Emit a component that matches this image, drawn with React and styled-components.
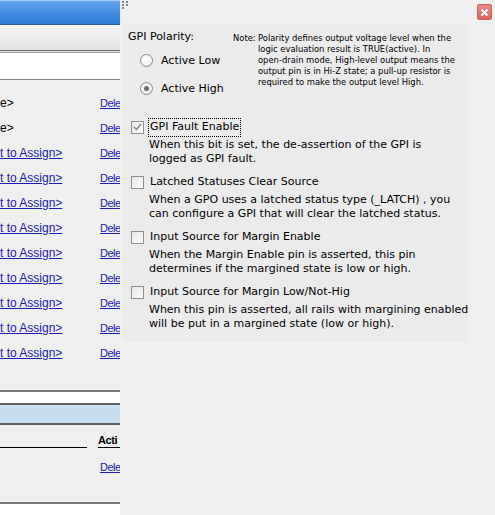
import React from 'react';
import styled, { createGlobalStyle } from 'styled-components';

const Global = createGlobalStyle`
  html, body { margin: 0; padding: 0; background: #f0f0f0; }
  body { font-family: "Liberation Sans", Arial, sans-serif; color: #000; }
  * { box-sizing: border-box; }
`;

const Screen = styled.div`
  display: flex;
  width: 495px;
  height: 515px;
  overflow: hidden;
`;

/* ---------- left background page ---------- */
const Left = styled.div`
  width: 120px;
  flex: none;
  display: flex;
  flex-direction: column;
  background: #efefef;
  overflow: hidden;
`;

const TitleBar = styled.div`
  height: 25px;
  flex: none;
  border-top: 1px solid #a4cbf4;
  border-bottom: 1px solid #2c5b99;
  background: linear-gradient(#62a2ec, #2b78d8);
`;

const Toolbar = styled.div`
  height: 26px;
  flex: none;
  background: linear-gradient(#f4f4f4, #e2e2e2);
  border-bottom: 1px solid #6b6b6b;
`;

const Field = styled.div`
  height: 29px;
  flex: none;
  background: #fff;
  border-top: 1px solid #dcdcdc;
  border-bottom: 1px solid #8a8a8a;
  box-shadow: inset 0 1px 0 #a2a2a2;
`;

const RowList = styled.div`
  height: 310px;
  flex: none;
  padding-top: 10px;
  display: flex;
  flex-direction: column;
`;

const Row = styled.div`
  height: 25px;
  display: flex;
  align-items: center;
  font-size: 12px;
  white-space: nowrap;
`;

const Cell = styled.span`
  width: 100px;
  flex: none;
  color: ${(p) => (p.$link ? '#1b1bb0' : '#000')};
  text-decoration: ${(p) => (p.$link ? 'underline' : 'none')};
`;

const Link = styled.span`
  color: #1b1bb0;
  text-decoration: underline;
  font-size: 11px;
  letter-spacing: -0.5px;
  white-space: nowrap;
`;

const ThickLine = styled.div`
  height: 2px;
  flex: none;
  background: #7a7a7a;
`;

const WhiteStrip = styled.div`
  height: ${(p) => p.$h}px;
  flex: none;
  background: #fff;
`;

const BlueBand = styled.div`
  height: 22px;
  flex: none;
  border-top: 2px solid #606060;
  border-bottom: 2px solid #606060;
  background: #c6dcef;
`;

const HeadRow = styled.div`
  height: 23px;
  flex: none;
  display: flex;
  align-items: flex-end;
`;

const HeadCell = styled.div`
  height: 100%;
  flex: none;
  width: ${(p) => p.$w}px;
  margin-right: ${(p) => p.$mr || 0}px;
  border-bottom: 1px solid #000;
  font-size: 11px;
  font-weight: bold;
  letter-spacing: -0.4px;
  padding-top: 9px;
  white-space: nowrap;
`;

const DataRow = styled.div`
  height: 54px;
  flex: none;
  padding: 9px 0 0 100px;
`;

/* ---------- right panel ---------- */
const Right = styled.div`
  flex: 1;
  display: flex;
  flex-direction: column;
  background: #f0f0f0;
  font-family: "DejaVu Sans", Verdana, sans-serif;
`;

const PanelHead = styled.div`
  height: 23px;
  display: flex;
  justify-content: space-between;
  align-items: flex-start;
  padding: 1px 4px 0 2px;
`;

const CloseBtn = styled.div`
  width: 15px;
  height: 16px;
  margin-top: 3px;
  border: 1px solid #c6605e;
  border-radius: 2px;
  background: linear-gradient(#ee8a88, #dc6462);
  display: flex;
  align-items: center;
  justify-content: center;
`;

const Group = styled.div`
  margin: 0 28px 0 3px;
  height: 319px;
  background: #ebebeb;
  padding: 0 0 0 5px;
`;

const Polarity = styled.div`
  display: flex;
  padding-top: 7px;
`;

const PolarityCol = styled.div`
  width: 105px;
  flex: none;
`;

const Caption = styled.div`
  font-size: 11px;
  line-height: 14px;
`;

const RadioRow = styled.div`
  display: flex;
  align-items: center;
  height: 20px;
  margin-top: ${(p) => p.$mt}px;
  padding-left: 12px;
  font-size: 11px;
  gap: 8px;
  white-space: nowrap;
`;

const RadioCircle = styled.span`
  width: 13px;
  height: 13px;
  flex: none;
  border-radius: 50%;
  border: 1px solid #8c8c8c;
  background: radial-gradient(circle at 40% 35%, #ffffff, #e6e6e6);
  display: flex;
  align-items: center;
  justify-content: center;
  &::after {
    content: '';
    display: ${(p) => (p.$on ? 'block' : 'none')};
    width: 5px;
    height: 5px;
    border-radius: 50%;
    background: #6b6b6b;
  }
`;

const Note = styled.div`
  display: flex;
  margin-top: 3px;
  font-size: 8.4px;
  line-height: 11px;
`;

const NoteLabel = styled.span`
  width: 25px;
  flex: none;
`;

const NoteText = styled.div`
  width: 200px;
  white-space: nowrap;
`;

const Options = styled.div`
  margin-top: 20px;
  display: flex;
  flex-direction: column;
  gap: 7px;
`;

const Option = styled.div``;

const OptionHead = styled.div`
  height: 18px;
  display: flex;
  align-items: center;
  padding-left: 3px;
  font-size: 11px;
`;

const Box = styled.span`
  width: 13px;
  height: 13px;
  flex: none;
  border: 1px solid #8e8f8f;
  background: linear-gradient(135deg, #e8e8e8, #fbfbfb);
  display: flex;
  align-items: center;
  justify-content: center;
`;

const OptionLabel = styled.span`
  margin-left: 4px;
  padding: 1px 1px 2px;
  border: 1px dotted ${(p) => (p.$focus ? '#000' : 'transparent')};
  line-height: 14px;
`;

const Desc = styled.div`
  padding-left: 21px;
  font-size: 11px;
  line-height: 14px;
  margin-top: 2px;
  white-space: nowrap;
`;

const Grip = () => (
  <svg width="8" height="10" viewBox="0 0 8 10">
    {[
      [0, 0], [4, 0], [0, 3], [4, 3], [0, 6],
    ].map(([x, y], i) => (
      <rect key={i} x={x} y={y} width="2" height="2" fill="#8a8a8a" />
    ))}
  </svg>
);

const Check = () => (
  <svg width="9" height="8" viewBox="0 0 9 8">
    <path d="M1 4 L3.5 6.5 L8 1" fill="none" stroke="#7d7d7d" strokeWidth="1.3" />
  </svg>
);

const rows = [
  { t: 'e>', link: false },
  { t: 'e>', link: false },
  ...Array.from({ length: 9 }, () => ({ t: 't to Assign>', link: true })),
];

const options = [
  {
    label: 'GPI Fault Enable',
    checked: true,
    focus: true,
    desc: ['When this bit is set, the de-assertion of the GPI is', 'logged as GPI fault.'],
  },
  {
    label: 'Latched Statuses Clear Source',
    desc: ['When a GPO uses a latched status type (_LATCH) , you', 'can configure a GPI that will clear the latched status.'],
  },
  {
    label: 'Input Source for Margin Enable',
    desc: ['When the Margin Enable pin is asserted, this pin', 'determines if the margined state is low or high.'],
  },
  {
    label: 'Input Source for Margin Low/Not-Hig',
    desc: ['When this pin is asserted, all rails with margining enabled', 'will be put in a margined state (low or high).'],
  },
];

const noteLines = [
  'Polarity defines output voltage level when the',
  'logic evaluation result is TRUE(active). In',
  'open-drain mode, High-level output means the',
  'output pin is in Hi-Z state; a pull-up resistor is',
  'required to make the output level High.',
];

export default function App() {
  return (
    <>
      <Global />
      <Screen>
        <Left>
          <TitleBar />
          <Toolbar />
          <Field />
          <RowList>
            {rows.map((r, i) => (
              <Row key={i}>
                <Cell $link={r.link}>{r.t}</Cell>
                <Link>Dele</Link>
              </Row>
            ))}
          </RowList>
          <ThickLine />
          <WhiteStrip $h={11} />
          <BlueBand />
          <HeadRow>
            <HeadCell $w={87} $mr={11} />
            <HeadCell $w={22}>Acti</HeadCell>
          </HeadRow>
          <DataRow>
            <Link>Dele</Link>
          </DataRow>
          <ThickLine />
          <WhiteStrip $h={20} />
        </Left>
        <Right>
          <PanelHead>
            <Grip />
            <CloseBtn>
              <svg width="9" height="9" viewBox="0 0 9 9">
                <path d="M1.5 1.5 L7.5 7.5 M7.5 1.5 L1.5 7.5" stroke="#fff" strokeWidth="2" />
              </svg>
            </CloseBtn>
          </PanelHead>
          <Group>
            <Polarity>
              <PolarityCol>
                <Caption>GPI Polarity:</Caption>
                <RadioRow $mt={6}>
                  <RadioCircle />
                  Active Low
                </RadioRow>
                <RadioRow $mt={8}>
                  <RadioCircle $on />
                  Active High
                </RadioRow>
              </PolarityCol>
              <Note>
                <NoteLabel>Note:</NoteLabel>
                <NoteText>
                  {noteLines.map((l) => (
                    <div key={l}>{l}</div>
                  ))}
                </NoteText>
              </Note>
            </Polarity>
            <Options>
              {options.map((o) => (
                <Option key={o.label}>
                  <OptionHead>
                    <Box>{o.checked && <Check />}</Box>
                    <OptionLabel $focus={o.focus}>{o.label}</OptionLabel>
                  </OptionHead>
                  <Desc>
                    {o.desc[0]}
                    <br />
                    {o.desc[1]}
                  </Desc>
                </Option>
              ))}
            </Options>
          </Group>
        </Right>
      </Screen>
    </>
  );
}
